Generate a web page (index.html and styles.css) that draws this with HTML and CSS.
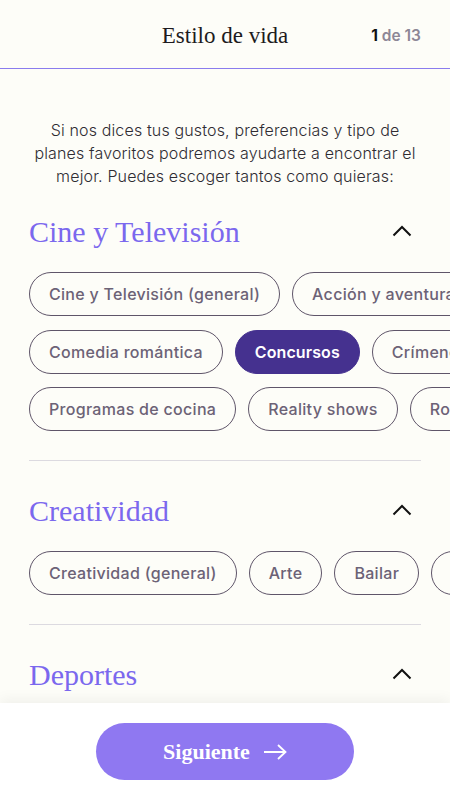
FILE: index.html
```html
<!DOCTYPE html>
<html lang="es">
<head>
    <meta charset="UTF-8">
    <meta name="viewport" content="width=device-width, initial-scale=1.0">
    <title>Estilo de vida</title>
    <link rel="stylesheet" href="styles.css">
</head>
<body>
    <header class="topbar">
        <span></span>
        <h1 class="topbar-title">Estilo de vida</h1>
        <div class="step"><b>1</b> de 13</div>
    </header>

    <main class="content">
        <p class="intro">Si nos dices tus gustos, preferencias y tipo de planes favoritos podremos ayudarte a encontrar el mejor. Puedes escoger tantos como quieras:</p>

        <section class="group">
            <div class="group-head">
                <h2 class="group-title">Cine y Televisión</h2>
                <svg class="chevron" width="20" height="12" viewBox="0 0 20 12"><path d="M1.5 10.5 L10 2 L18.5 10.5" fill="none" stroke="#111" stroke-width="2"/></svg>
            </div>
            <div class="chips">
                <div class="chip-row">
                    <button class="chip">Cine y Televisión (general)</button>
                    <button class="chip">Acción y aventura</button>
                    <button class="chip">Animación</button>
                </div>
                <div class="chip-row">
                    <button class="chip">Comedia romántica</button>
                    <button class="chip selected">Concursos</button>
                    <button class="chip">Crímenes y misterio</button>
                </div>
                <div class="chip-row">
                    <button class="chip">Programas de cocina</button>
                    <button class="chip">Reality shows</button>
                    <button class="chip">Romance</button>
                </div>
            </div>
        </section>

        <section class="group">
            <div class="group-head">
                <h2 class="group-title">Creatividad</h2>
                <svg class="chevron" width="20" height="12" viewBox="0 0 20 12"><path d="M1.5 10.5 L10 2 L18.5 10.5" fill="none" stroke="#111" stroke-width="2"/></svg>
            </div>
            <div class="chips">
                <div class="chip-row">
                    <button class="chip">Creatividad (general)</button>
                    <button class="chip">Arte</button>
                    <button class="chip">Bailar</button>
                    <button class="chip">Cantar</button>
                </div>
            </div>
        </section>

        <section class="group">
            <div class="group-head">
                <h2 class="group-title">Deportes</h2>
                <svg class="chevron" width="20" height="12" viewBox="0 0 20 12"><path d="M1.5 10.5 L10 2 L18.5 10.5" fill="none" stroke="#111" stroke-width="2"/></svg>
            </div>
        </section>
    </main>

    <footer class="footer">
        <button class="next-button">
            Siguiente
            <svg width="24" height="16" viewBox="0 0 24 16"><path d="M1 8 H22.5 M15 1 L22.5 8 L15 15" fill="none" stroke="#fff" stroke-width="1.8"/></svg>
        </button>
    </footer>
</body>
</html>
```

FILE: styles.css
```css
body {
    margin: 0;
    background-color: #fdfdf8;
    font-family: 'Inter', 'Noto Sans', sans-serif;
    color: #2e2b33;
    overflow: hidden;
    height: 100vh;
}

.topbar {
    display: grid;
    grid-template-columns: 1fr auto 1fr;
    align-items: center;
    height: 68px;
    border-bottom: 1px solid #8a7cee;
}

.topbar-title {
    margin: 0;
    font-family: 'Liberation Serif', serif;
    font-weight: 400;
    font-size: 23px;
    color: #1d1b20;
    padding-top: 4px;
}

.step {
    justify-self: end;
    padding-right: 29px;
    padding-top: 3px;
    font-size: 15.5px;
    font-weight: 600;
    color: #8d8796;
}

.step b {
    color: #111;
    font-weight: 700;
}

.content {
    padding: 50px 29px 0;
}

.intro {
    margin: 0;
    text-align: center;
    font-size: 16px;
    font-weight: 300;
    line-height: 23px;
    letter-spacing: 0.15px;
    color: #2f2c33;
}

.group {
    padding-top: 24px;
}

.group + .group {
    border-top: 1px solid #dcdae0;
    margin-top: 29px;
    padding-top: 30px;
}

.group-head {
    display: flex;
    justify-content: space-between;
    align-items: center;
    height: 40px;
}

.group-title {
    margin: 0;
    font-family: 'Liberation Serif', serif;
    font-weight: 400;
    font-size: 30px;
    color: #7b68ee;
}

.chevron {
    margin-right: 9px;
    margin-top: -3px;
}

.chips {
    display: flex;
    flex-direction: column;
    gap: 13.5px;
    margin-top: 20px;
    margin-right: -29px;
    overflow: hidden;
}

.chip-row {
    display: flex;
    gap: 12px;
}

.chip {
    flex: none;
    height: 44px;
    padding: 0 19px;
    border: 1px solid #5f5569;
    border-radius: 22px;
    background: transparent;
    font-family: 'Inter', 'Noto Sans', sans-serif;
    font-size: 16px;
    font-weight: 500;
    letter-spacing: 0.3px;
    color: #6c6276;
    white-space: nowrap;
    cursor: pointer;
}

.chip.selected {
    background: #45318f;
    border-color: #45318f;
    color: #fff;
    font-weight: 600;
    letter-spacing: 0.1px;
}

.footer {
    position: fixed;
    left: 0;
    right: 0;
    bottom: 0;
    height: 97px;
    background: #fff;
    box-shadow: 0 -4px 12px rgba(0, 0, 0, 0.05);
    display: flex;
    justify-content: center;
    padding-top: 20px;
    box-sizing: border-box;
}

.next-button {
    width: 258px;
    height: 57px;
    border: none;
    border-radius: 29px;
    background: #8f78f1;
    color: #fff;
    font-family: 'Liberation Serif', serif;
    font-weight: 700;
    font-size: 22px;
    display: flex;
    align-items: center;
    justify-content: center;
    gap: 13px;
    cursor: pointer;
}
```
